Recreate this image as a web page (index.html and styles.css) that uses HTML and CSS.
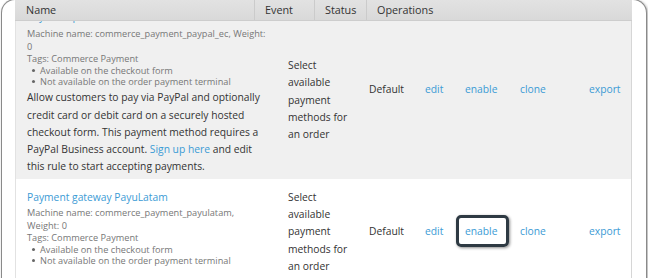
FILE: index.html
```html
<!DOCTYPE html>
<html lang="en">
<head>
<meta charset="utf-8">
<title>Payment method rules</title>
<link rel="stylesheet" href="styles.css">
</head>
<body>
<div class="frame">
  <div class="rules">
    <div class="sticky-head">
      <div class="th th-name">Name</div>
      <div class="th th-event">Event</div>
      <div class="th th-status">Status</div>
      <div class="th th-ops">Operations</div>
    </div>

    <div class="row row-odd">
      <div class="cell cell-name">
        <a class="rule-title rule-title-under" href="#">PayPal Express Checkout</a>
        <div class="meta">Machine name: commerce_payment_paypal_ec, Weight: 0</div>
        <div class="meta meta-tags">Tags: Commerce Payment</div>
        <ul class="avail">
          <li>Available on the checkout form</li>
          <li>Not available on the order payment terminal</li>
        </ul>
        <p class="desc">Allow customers to pay via PayPal and optionally credit card or debit card on a securely hosted checkout form. This payment method requires a PayPal Business account. <a href="#">Sign up here</a> and edit this rule to start accepting payments.</p>
      </div>
      <div class="cell cell-event cell-event-low">Select available payment methods for an order</div>
      <div class="cell">Default</div>
      <div class="cell"><a href="#">edit</a></div>
      <div class="cell"><a href="#">enable</a></div>
      <div class="cell"><a href="#">clone</a></div>
      <div class="cell"><a href="#">export</a></div>
    </div>

    <div class="row row-even">
      <div class="cell cell-name">
        <a class="rule-title" href="#">Payment gateway PayuLatam</a>
        <div class="meta">Machine name: commerce_payment_payulatam, Weight: 0</div>
        <div class="meta meta-tags">Tags: Commerce Payment</div>
        <ul class="avail">
          <li>Available on the checkout form</li>
          <li>Not available on the order payment terminal</li>
        </ul>
      </div>
      <div class="cell cell-event">Select available payment methods for an order</div>
      <div class="cell">Default</div>
      <div class="cell"><a href="#">edit</a></div>
      <div class="cell"><a class="highlight" href="#">enable</a></div>
      <div class="cell"><a href="#">clone</a></div>
      <div class="cell"><a href="#">export</a></div>
    </div>
  </div>
</div>
</body>
</html>
```

FILE: styles.css
```css
html, body {
  margin: 0;
  padding: 0;
  background: #fff;
  overflow: hidden;
}

body {
  width: 648px;
  height: 278px;
  font-family: "Open Sans", "Liberation Sans", sans-serif;
  color: #333;
}

a {
  color: #3b9bd5;
  text-decoration: none;
}

.frame {
  box-sizing: border-box;
  width: 646px;
  height: 300px;
  margin: -1px 0 0 1px;
  padding: 0 14px 0 13px;
  border: 1px solid #8a8a8a;
  border-bottom: none;
  border-radius: 14px 14px 0 0;
  box-shadow: 1px 1px 3px rgba(0, 0, 0, 0.35);
  background: #fff;
  overflow: hidden;
}

.rules {
  position: relative;
  border-left: 1px solid #e2e2e2;
  border-right: 1px solid #d6d6d6;
}

/* sticky table header laid over the scrolled rows */
.sticky-head {
  position: absolute;
  top: 0;
  left: -1px;
  right: -1px;
  z-index: 2;
  display: flex;
  height: 21px;
  box-sizing: border-box;
  background: linear-gradient(#e2e2e2, #d9d9d9);
  border-bottom: 1px solid #cdcdcd;
  font-size: 10.8px;
  line-height: 19px;
  color: #333;
}

.th {
  box-sizing: border-box;
  padding-left: 10px;
  border-left: 1px solid #cbcbcb;
}

.th-name {
  width: 239px;
  padding-left: 11px;
  border-left: none;
}

.th-event {
  width: 60px;
}

.th-status {
  width: 52px;
}

.th-ops {
  flex: 1;
}

.row {
  display: grid;
  grid-template-columns: 262px 81px 56px 40px 55px 69px 1fr;
  align-items: center;
}

.row-odd {
  background: #f0f0f0;
}

.row-even {
  background: #fff;
}

.cell {
  padding: 10px 0 10px 10px;
  font-size: 10.3px;
  line-height: 17.3px;
}

.cell-name {
  align-self: start;
  padding: 10px 11.5px 3px 11px;
}

.cell-event {
  padding-right: 10px;
}

.cell-event-low {
  align-self: start;
  padding-top: 57px;
}

.rule-title {
  display: block;
}

.rule-title-under {
  margin: -2px 0 2px;
}

.meta {
  font-size: 9.2px;
  line-height: 13px;
  color: #777;
}

.meta-tags {
  line-height: 11px;
}

.avail {
  margin: 1px 0 0;
  padding: 0 0 0 13px;
  list-style: none;
  font-size: 9.2px;
  line-height: 11px;
  color: #777;
}

.avail li::before {
  content: "";
  display: inline-block;
  width: 3px;
  height: 3px;
  margin: 0 5px 2px -8px;
  border-radius: 50%;
  background: #666;
  vertical-align: middle;
}

.desc {
  margin: 2px 0 0;
  font-size: 10.3px;
  line-height: 17.3px;
  color: #333;
}

.highlight {
  position: relative;
  display: inline-block;
}

.highlight::after {
  content: "";
  position: absolute;
  left: -9px;
  right: -11px;
  top: -8px;
  bottom: -6px;
  border: 3px solid #2e3a43;
  border-radius: 5px;
  box-shadow: 1px 1px 3px rgba(0, 0, 0, 0.45);
}
```
